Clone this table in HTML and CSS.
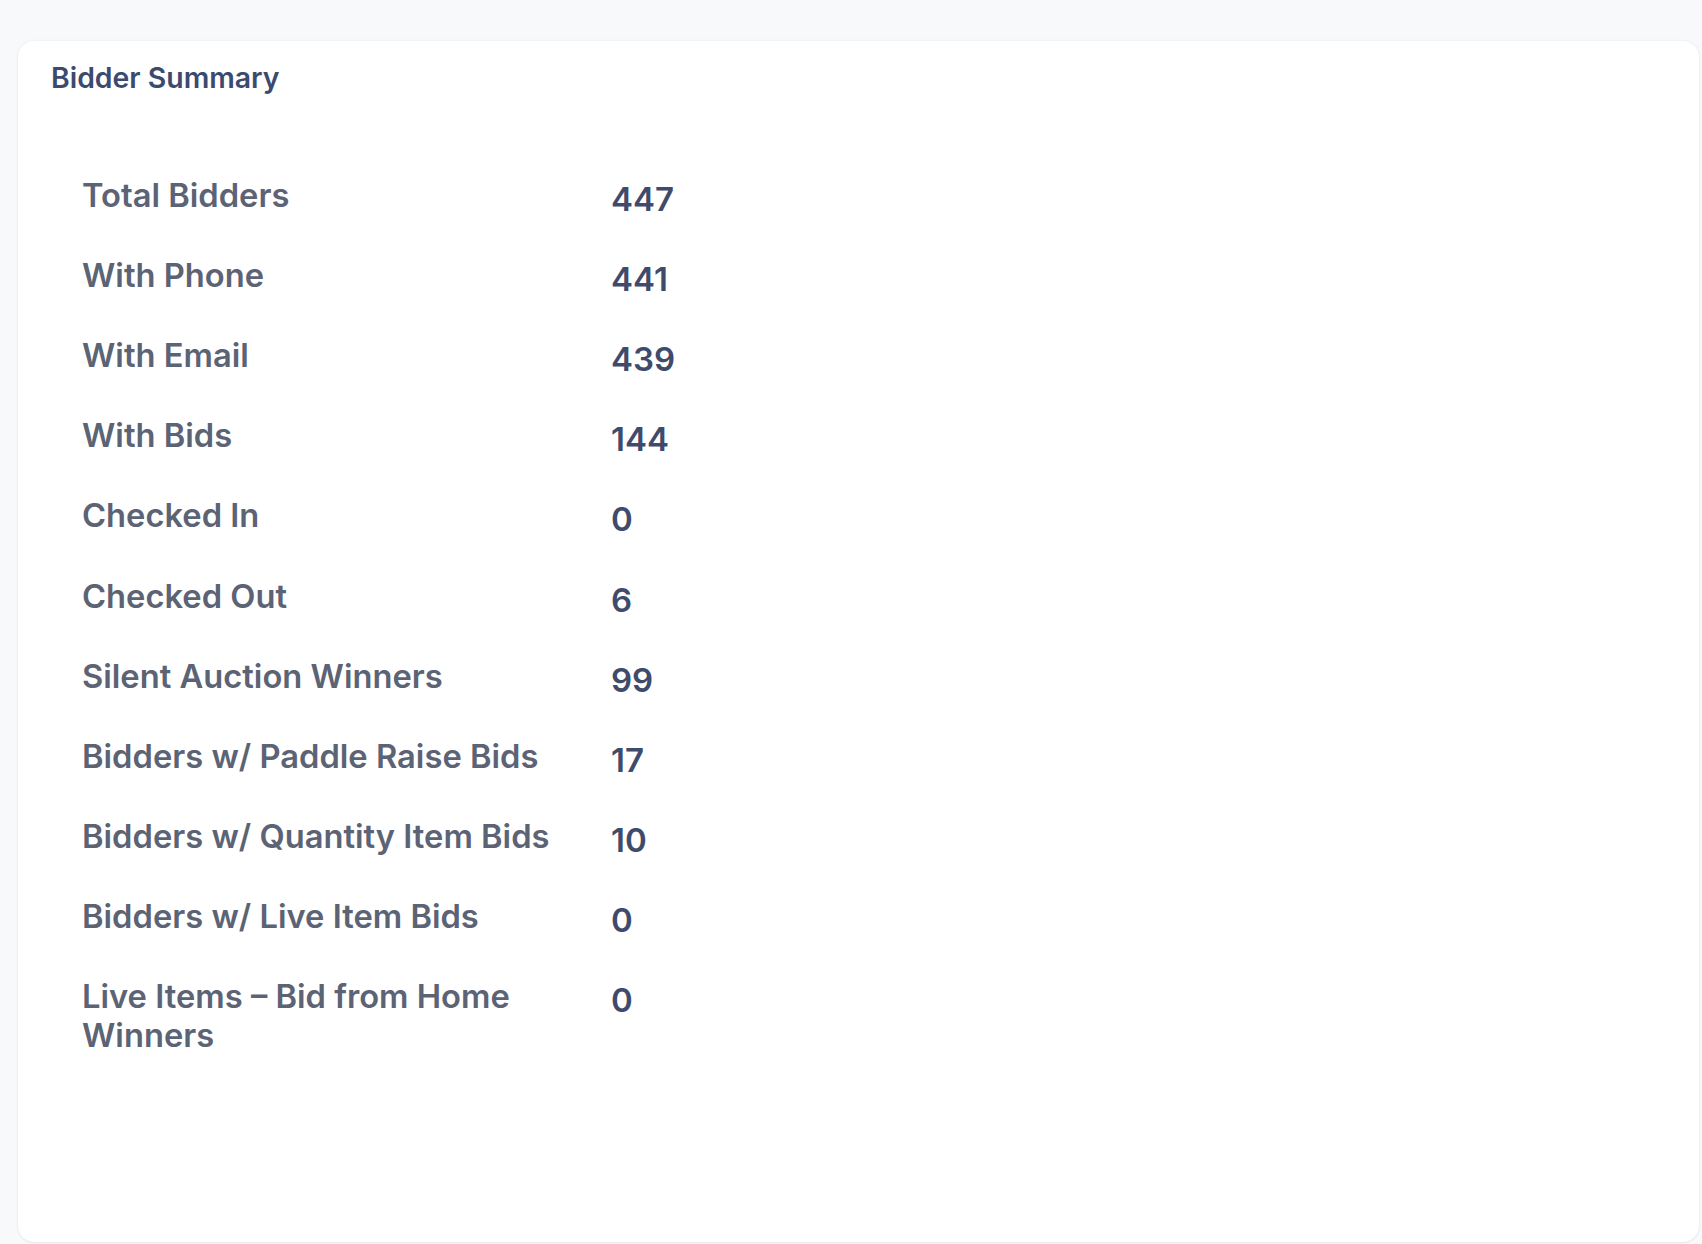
FILE: index.html
```html
<!DOCTYPE html>
<html lang="en">
<head>
<meta charset="utf-8">
<title>Bidder Summary</title>
<link rel="stylesheet" href="styles.css">
</head>
<body>
<section class="card">
  <h2 class="card-title">Bidder Summary</h2>
  <div class="summary">
    <div class="label">Total Bidders</div><div class="value">447</div>
    <div class="label">With Phone</div><div class="value">441</div>
    <div class="label">With Email</div><div class="value">439</div>
    <div class="label">With Bids</div><div class="value">144</div>
    <div class="label">Checked In</div><div class="value">0</div>
    <div class="label">Checked Out</div><div class="value">6</div>
    <div class="label">Silent Auction Winners</div><div class="value">99</div>
    <div class="label">Bidders w/ Paddle Raise Bids</div><div class="value">17</div>
    <div class="label">Bidders w/ Quantity Item Bids</div><div class="value">10</div>
    <div class="label">Bidders w/ Live Item Bids</div><div class="value">0</div>
    <div class="label">Live Items – Bid from Home Winners</div><div class="value">0</div>
  </div>
</section>
</body>
</html>
```

FILE: styles.css
```css
html, body {
  margin: 0;
  padding: 0;
  background: #f8f9fb;
}

body {
  font-family: Inter, "Noto Sans", "Liberation Sans", sans-serif;
  padding: 41px 3px 3px 18px;
  overflow: hidden;
}

.card {
  background: #ffffff;
  border-radius: 16px;
  box-shadow: 0 0 3px rgba(30, 40, 70, 0.08), 0 1px 2px rgba(30, 40, 70, 0.05);
  height: 1201px;
  box-sizing: border-box;
  padding: 19px 32px 0 33px;
}

.card-title {
  margin: 0;
  font-size: 28.4px;
  line-height: 35px;
  font-weight: 600;
  color: #3b4a6e;
}

.summary {
  display: grid;
  grid-template-columns: 529px 1fr;
  margin-top: 60px;
  padding-left: 31px;
}

.label {
  font-size: 32.7px;
  line-height: 39px;
  font-weight: 600;
  color: #5c6375;
  padding: 20.6px 24px 20.6px 0;
}

.value {
  font-size: 33px;
  line-height: 39px;
  font-weight: 600;
  color: #3f4b6b;
  padding-top: 24.6px;
}
```
